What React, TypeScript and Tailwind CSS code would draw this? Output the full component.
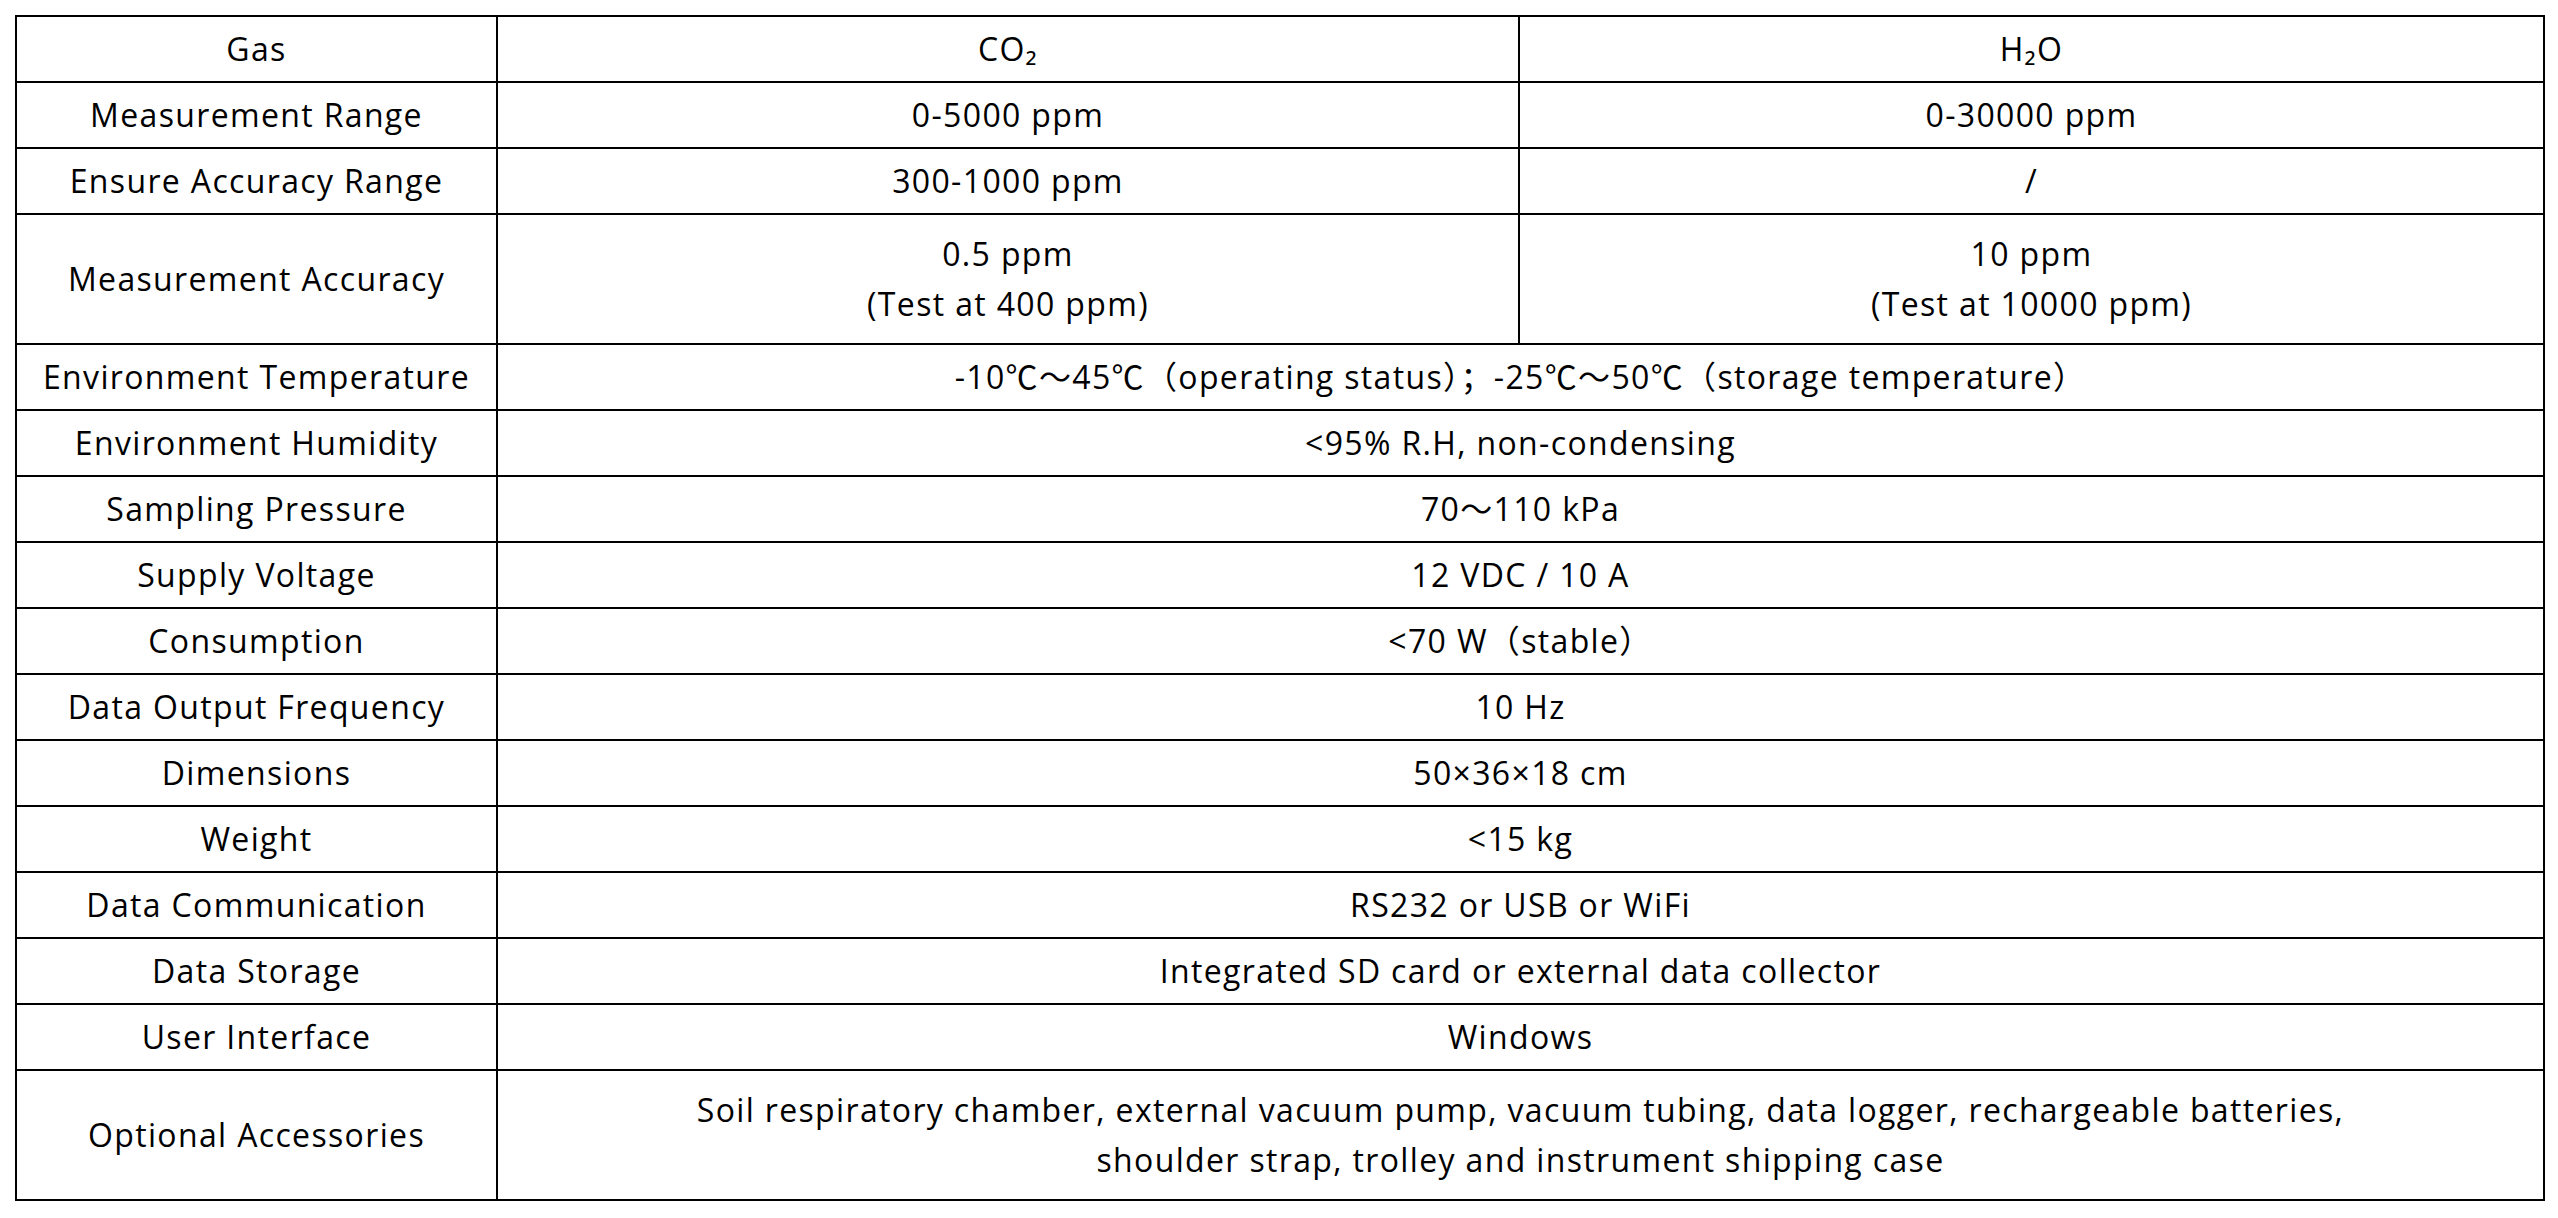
const rows: { label: string; cells: string[]; tall?: boolean }[] = [
  { label: 'Gas', cells: ['CO₂', 'H₂O'] },
  { label: 'Measurement Range', cells: ['0-5000 ppm', '0-30000 ppm'] },
  { label: 'Ensure Accuracy Range', cells: ['300-1000 ppm', '/'] },
  {
    label: 'Measurement Accuracy',
    cells: ['0.5 ppm\n(Test at 400 ppm)', '10 ppm\n(Test at 10000 ppm)'],
    tall: true,
  },
  {
    label: 'Environment Temperature',
    cells: ['-10℃～45℃（operating status）；-25℃～50℃（storage temperature）'],
  },
  { label: 'Environment Humidity', cells: ['<95% R.H, non-condensing'] },
  { label: 'Sampling Pressure', cells: ['70～110 kPa'] },
  { label: 'Supply Voltage', cells: ['12 VDC / 10 A'] },
  { label: 'Consumption', cells: ['<70 W（stable）'] },
  { label: 'Data Output Frequency', cells: ['10 Hz'] },
  { label: 'Dimensions', cells: ['50×36×18 cm'] },
  { label: 'Weight', cells: ['<15 kg'] },
  { label: 'Data Communication', cells: ['RS232 or USB or WiFi'] },
  { label: 'Data Storage', cells: ['Integrated SD card or external data collector'] },
  { label: 'User Interface', cells: ['Windows'] },
  {
    label: 'Optional Accessories',
    cells: [
      'Soil respiratory chamber, external vacuum pump, vacuum tubing, data logger, rechargeable batteries,\nshoulder strap, trolley and instrument shipping case',
    ],
    tall: true,
  },
];

export default function App() {
  return (
    <div className="min-h-screen bg-white pl-[15px] pt-[15px] text-black [font-family:'Open_Sans','Noto_Sans_CJK_SC',sans-serif]">
      <table className="w-[2528px] table-fixed border-collapse border-2 border-black text-[32px] tracking-[1.35px]">
        <colgroup>
          <col className="w-[481px]" />
          <col className="w-[1022px]" />
          <col className="w-[1025px]" />
        </colgroup>
        <tbody>
          {rows.map((r) => (
            <tr key={r.label} className={r.tall ? 'h-[130px]' : 'h-[66px]'}>
              <td className="border-2 border-black p-0 text-center align-middle">{r.label}</td>
              {r.cells.map((c, i) => (
                <td
                  key={i}
                  colSpan={r.cells.length === 1 ? 2 : 1}
                  className="whitespace-pre-line border-2 border-black p-0 text-center align-middle leading-[50px]"
                >
                  {c}
                </td>
              ))}
            </tr>
          ))}
        </tbody>
      </table>
    </div>
  );
}
